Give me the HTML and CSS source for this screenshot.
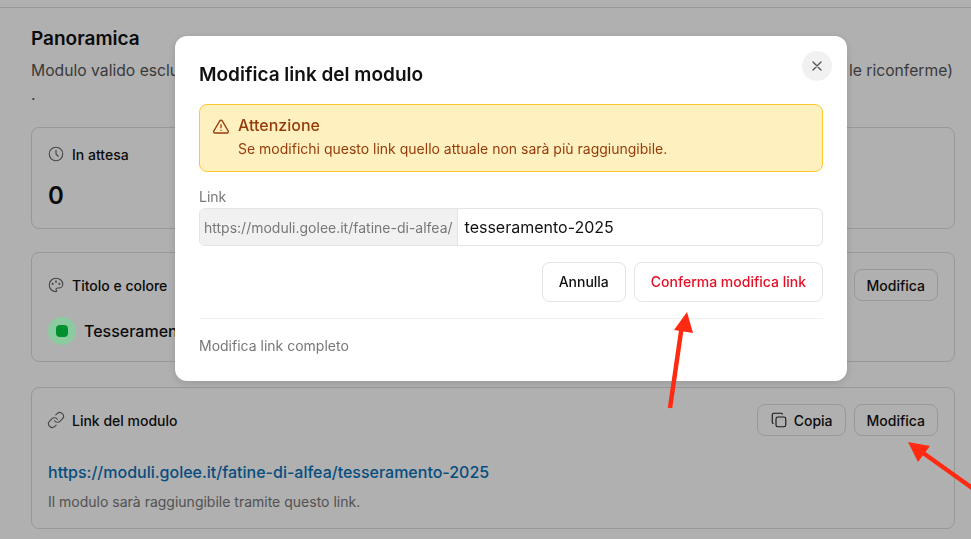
FILE: index.html
```html
<!DOCTYPE html>
<html lang="it">
<head>
<meta charset="utf-8">
<title>Modifica link del modulo</title>
<link rel="stylesheet" href="styles.css">
</head>
<body>
<div class="topbar"></div>
<main class="page">
  <h2 class="page-title">Panoramica</h2>
  <p class="page-desc">Modulo valido esclusivamente per tutti i nuovi tesseramenti della stagione sportiva 2025/2026 (non valido per le riconferme) .</p>
  <section class="card card-stat">
    <div class="card-label">
      <svg class="icon" viewBox="0 0 24 24"><circle cx="12" cy="12" r="9"/><path d="M12 7v5l3 3"/></svg>
      <span>In attesa</span>
    </div>
    <div class="stat">0</div>
  </section>
  <section class="card card-title">
    <div class="card-head">
      <div class="card-label">
        <svg class="icon" viewBox="0 0 24 24"><path d="M12 21a9 9 0 0 1 0-18c5 0 9 3.6 9 8a5 5 0 0 1-5 5h-2a2 2 0 0 0-1 3.75A1.3 1.3 0 0 1 12 21"/><circle cx="7.5" cy="10.5" r=".6"/><circle cx="12" cy="7.5" r=".6"/><circle cx="16.5" cy="10.5" r=".6"/></svg>
        <span>Titolo e colore</span>
      </div>
      <button class="btn">Modifica</button>
    </div>
    <div class="title-row">
      <span class="swatch"><span class="swatch-dot"></span></span>
      <span class="title-text">Tesseramento 2025</span>
    </div>
  </section>
  <section class="card card-link">
    <div class="card-head">
      <div class="card-label">
        <svg class="icon" viewBox="0 0 24 24"><path d="M10 13a5 5 0 0 0 7.54.54l3-3a5 5 0 0 0-7.07-7.07l-1.72 1.71"/><path d="M14 11a5 5 0 0 0-7.54-.54l-3 3a5 5 0 0 0 7.07 7.07l1.71-1.71"/></svg>
        <span>Link del modulo</span>
      </div>
      <div class="actions">
        <button class="btn btn-copy">
          <svg class="icon icon-dark" viewBox="0 0 24 24"><rect x="8" y="8" width="13" height="13" rx="2.5"/><path d="M4.2 16.7A2 2 0 0 1 3 15V5a2 2 0 0 1 2-2h10c.75 0 1.2.4 1.6 1"/></svg>
          <span>Copia</span>
        </button>
        <button class="btn">Modifica</button>
      </div>
    </div>
    <a class="full-link">https://moduli.golee.it/fatine-di-alfea/tesseramento-2025</a>
    <p class="hint">Il modulo sarà raggiungibile tramite questo link.</p>
  </section>
</main>

<div class="overlay"></div>

<div class="modal">
  <header class="modal-head">
    <h1 class="modal-title">Modifica link del modulo</h1>
    <button class="close" aria-label="Chiudi">
      <svg viewBox="0 0 24 24"><path d="M6 6l12 12M18 6L6 18"/></svg>
    </button>
  </header>
  <div class="alert">
    <svg class="alert-icon" viewBox="0 0 24 24"><path d="M12 9v4"/><path d="M10.36 3.9 2.3 17.4A1.9 1.9 0 0 0 3.94 20h16.12a1.9 1.9 0 0 0 1.64-2.6L13.64 3.9a1.9 1.9 0 0 0-3.28 0z"/><path d="M12 16.5h.01"/></svg>
    <div>
      <div class="alert-title">Attenzione</div>
      <div class="alert-text">Se modifichi questo link quello attuale non sarà più raggiungibile.</div>
    </div>
  </div>
  <label class="field-label">Link</label>
  <div class="input-group">
    <span class="addon">https://moduli.golee.it/fatine-di-alfea/</span>
    <span class="input">tesseramento-2025</span>
  </div>
  <div class="modal-actions">
    <button class="mbtn">Annulla</button>
    <button class="mbtn mbtn-danger">Conferma modifica link</button>
  </div>
  <div class="modal-foot">Modifica link completo</div>
</div>

<svg class="arrow arrow-a" viewBox="0 0 40 100"><path class="arrow-line" d="M10 98 L22 15"/><path class="arrow-head" d="M27 2 L33 23 L14 20 Z"/></svg>
<svg class="arrow arrow-b" viewBox="0 0 70 80"><path class="arrow-line" d="M72 58 L16 18"/><path class="arrow-head" d="M5 10 L27 14 L15 30 Z"/></svg>
</body>
</html>
```
FILE: styles.css
```css
* { box-sizing: border-box; }
html, body { margin: 0; height: 100%; overflow: hidden; }
body { background: #fff; color: #111; font-family: Inter, "Liberation Sans", sans-serif; }
.topbar { height: 8px; border-bottom: 1px solid #ddd; }
.page { padding: 19px 16px 0 31px; }
.page-title { margin: 0; font-size: 19px; line-height: 24px; font-weight: 600; color: #111; }
.page-desc { margin: 8px 0 0; font-size: 15.7px; line-height: 24px; color: #555; height: 48px; }
.card { border: 1px solid #ddd; border-radius: 8px; padding: 16px; }
.card-stat { margin-top: 20px; height: 102px; padding-top: 17px; }
.card-title { margin-top: 23px; height: 110px; }
.card-link { margin-top: 25px; height: 142px; }
.card-label { display: flex; align-items: center; gap: 8px; font-size: 14px; font-weight: 500; color: #111; }
.icon { width: 18px; height: 18px; margin: 0 -1px; fill: none; stroke: #666; stroke-width: 1.5; stroke-linecap: round; stroke-linejoin: round; flex: none; }
.icon-dark { stroke: #222; }
.stat { margin-top: 17px; font-size: 24px; line-height: 32px; font-weight: 600; color: #111; }
.card-head { display: flex; align-items: center; justify-content: space-between; height: 32px; }
.actions { display: flex; gap: 8px; }
.btn { display: flex; align-items: center; gap: 6px; height: 32px; padding: 0 12px; border: 1px solid #ddd; border-radius: 8px; background: #fff; font: 500 14px Inter, sans-serif; color: #111; }
.btn .icon { margin: 0; }
.title-row { display: flex; align-items: center; gap: 8px; margin-top: 16px; }
.swatch { position: relative; z-index: 1; width: 28px; height: 28px; border-radius: 50%; background: #8ccb9f; display: flex; align-items: center; justify-content: center; }
.swatch-dot { width: 12px; height: 12px; border-radius: 4px; background: #00902f; }
.title-text { font-size: 16px; font-weight: 500; color: #111; }
.full-link { display: block; margin-top: 24px; font-size: 16px; line-height: 24px; font-weight: 500; color: #0a71b8; }
.hint { margin: 8px 0 0; font-size: 14px; line-height: 20px; color: #777; }
.overlay { position: fixed; inset: 0; background: rgba(0, 0, 0, .31); }
.modal { position: fixed; left: 175px; top: 36px; width: 672px; height: 345px; padding: 24px; background: #fff; border-radius: 12px; box-shadow: 0 2px 8px rgba(0,0,0,.15); }
.modal-head { display: flex; align-items: flex-start; justify-content: space-between; height: 44px; }
.modal-title { margin: 1px 0 0; font-size: 19px; line-height: 28px; font-weight: 600; color: #111; }
.close { width: 30px; height: 30px; margin: -9px -9px 0 0; padding: 7px; border: 0; border-radius: 50%; background: #f1f1f1; }
.close svg { display: block; width: 16px; height: 16px; fill: none; stroke: #555; stroke-width: 2; stroke-linecap: round; }
.alert { display: flex; gap: 8px; height: 68px; padding: 11px 12px; border: 1px solid #fdc72e; border-radius: 8px; background: #fff0bf; color: #963b0a; }
.alert-icon { width: 18px; height: 18px; margin-top: 2px; fill: none; stroke: #963b0a; stroke-width: 1.7; stroke-linecap: round; stroke-linejoin: round; flex: none; }
.alert-title { font-size: 16px; line-height: 18px; font-weight: 500; }
.alert-text { margin-top: 5px; font-size: 14px; line-height: 20px; }
.field-label { display: block; margin-top: 15px; font-size: 14px; line-height: 20px; color: #777; }
.input-group { display: flex; height: 38px; margin-top: 1px; border: 1px solid #e4e4e4; border-radius: 6px; overflow: hidden; }
.addon { display: flex; align-items: center; padding: 0 4px; background: #f1f1f1; border-right: 1px solid #e4e4e4; font-size: 14px; color: #777; }
.input { display: flex; align-items: center; padding: 0 7px; font-size: 16px; color: #111; }
.modal-actions { display: flex; justify-content: flex-end; gap: 8px; margin-top: 16px; }
.mbtn { height: 40px; padding: 0 16px 1px; border: 1px solid #e4e4e4; border-radius: 8px; background: #fff; font: 500 14px Inter, sans-serif; color: #111; }
.mbtn-danger { color: #e60f25; }
.modal-foot { margin-top: 16px; padding-top: 17px; border-top: 1px solid #f1f1f1; font-size: 14px; line-height: 20px; color: #777; }
.arrow { position: fixed; overflow: visible; }
.arrow-line { fill: none; stroke: #ff2a12; stroke-width: 4.5; }
.arrow-head { fill: #ff2a12; }
.arrow-a { left: 660px; top: 310px; width: 40px; height: 100px; }
.arrow-b { left: 903px; top: 432px; width: 70px; height: 80px; }
```
